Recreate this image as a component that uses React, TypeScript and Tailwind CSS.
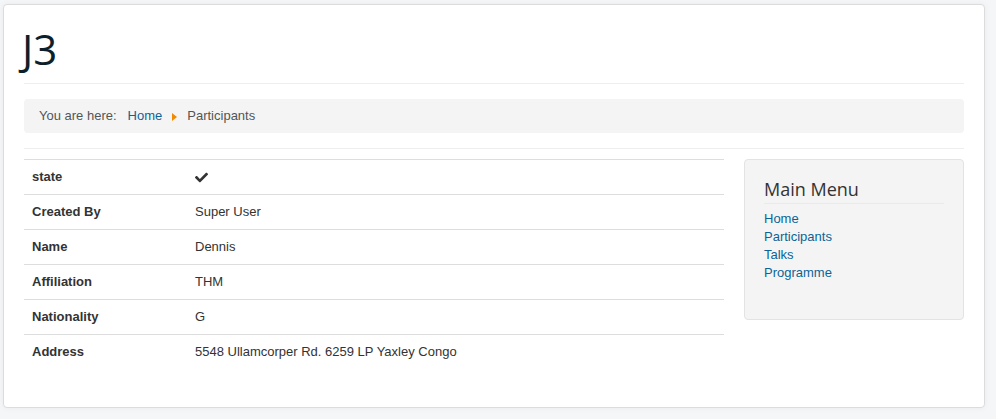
import { FaCheck } from "react-icons/fa"

const rows: { label: string; value: React.ReactNode }[] = [
  { label: "state", value: <FaCheck className="text-[#333] text-[13px]" /> },
  { label: "Created By", value: "Super User" },
  { label: "Name", value: "Dennis" },
  { label: "Affiliation", value: "THM" },
  { label: "Nationality", value: "G" },
  { label: "Address", value: "5548 Ullamcorper Rd. 6259 LP Yaxley Congo" },
]

const menu = ["Home", "Participants", "Talks", "Programme"]

export default function App() {
  return (
    <div className="min-h-[419px] bg-[#f4f6f7] pt-[4px] pl-[3px] font-['Liberation_Sans',Arial,sans-serif] text-[13px] leading-[18px] text-[#333]">
      <div className="w-[982px] rounded-[4px] border border-[#dcdcdc] bg-white p-[20px] shadow-[0_0_6px_rgba(0,0,0,0.05)]">
        {/* header */}
        <h1 className="-ml-[2px] font-['Open_Sans',sans-serif] text-[42px] font-[500] leading-[48px] text-[#0c1f2b]">J3</h1>
        <hr className="mt-[10px] border-t border-[#eee]" />

        {/* breadcrumbs */}
        <div className="mt-[15px] flex h-[34px] items-center rounded-[4px] bg-[#f4f4f4] px-[15px] text-[#555]">
          <span>You are here:</span>
          <a href="#" className="ml-[11px] text-[#0b6496]">Home</a>
          <span className="mx-[10px] mt-[2px] inline-block h-0 w-0 border-y-[4px] border-l-[5px] border-y-transparent border-l-[#f28a00]" />
          <span>Participants</span>
        </div>
        <hr className="mt-[15px] border-t border-[#eee]" />

        <div className="mt-[10px] flex gap-[20px]">
          {/* main */}
          <div className="w-[700px] pb-[18px]">
            <table className="w-full table-fixed border-collapse">
              <tbody>
                {rows.map((r) => (
                  <tr key={r.label} className="border-t border-[#ddd]">
                    <td className="w-[171px] py-[8px] pl-[8px] align-middle font-bold">{r.label}</td>
                    <td className="py-[8px] pr-[8px] align-middle">{r.value}</td>
                  </tr>
                ))}
              </tbody>
            </table>
          </div>

          {/* sidebar */}
          <div className="h-fit w-[220px] rounded-[4px] border border-[#e3e3e3] bg-[#f4f4f4] p-[19px] pb-[37px]">
            <h3 className="font-['Open_Sans',sans-serif] text-[18px] font-[500] leading-[20px] text-[#333]">Main Menu</h3>
            <hr className="mt-[4px] border-t border-[#eaeaea]" />
            <ul className="mt-[6px]">
              {menu.map((m) => (
                <li key={m}>
                  <a href="#" className="text-[#0b6496]">{m}</a>
                </li>
              ))}
            </ul>
          </div>
        </div>
      </div>
    </div>
  )
}
